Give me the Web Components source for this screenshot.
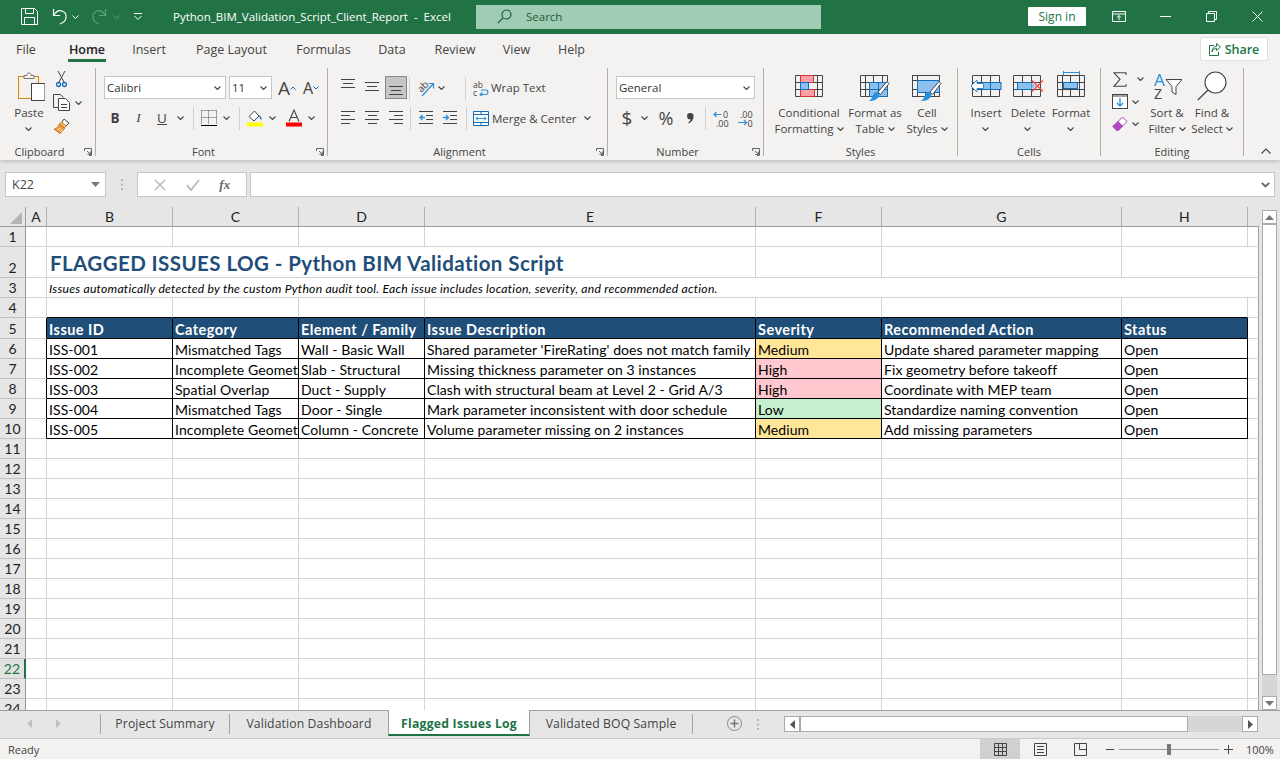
<!DOCTYPE html>
<html lang="en">
<head>
<meta charset="utf-8">
<title>Python_BIM_Validation_Script_Client_Report - Excel</title>
<style>
	html, body { margin: 0; height: 100%; overflow: hidden; background: #e6e6e6; }
	body { display: flex; flex-direction: column; width: 1280px; height: 759px; font-family: "Open Sans", sans-serif; }
</style>
</head>
<body>
<xl-titlebar></xl-titlebar>
<xl-menu></xl-menu>
<xl-ribbon></xl-ribbon>
<xl-formula></xl-formula>
<xl-sheet></xl-sheet>
<xl-sheet-tabs></xl-sheet-tabs>
<xl-status></xl-status>

<script>
const DK = '#444444', BL = '#2b8fd9', DB = '#106ebe', LB = '#8cc0ee', RD = '#d13438', PK = '#ff9ea3';

const brush = `<path d="M27 6.5 L18 17 L20.5 19.5 L29 8.5 Z" fill="#fff" stroke="${DK}" stroke-linejoin="round"/>
	<path d="M13.5 19 C16 15 20 17 19.5 20 C18 25 13 26 9 26 C12 24 12 22 13.5 19Z" fill="${BL}"/>`;
const grid28 = (x = 0) => `<path d="M${x + .5} .5h27v21h-27zM${x + .5} 7.5h27M${x + .5} 14.5h27M${x + 5.5} .5v21M${x + 13.5} .5v21M${x + 22.5} .5v21" fill="none" stroke="${DK}"/>`;
const lines = (rows) => rows.map(([x, y, w]) => `<path d="M${x} ${y + .5}h${w}" stroke="${DK}"/>`).join('');

const ICONS = {
	save: [17, 17, `<path d="M.5.5h13l3 3v13H.5zM4.5.5v5h8v-5M3.5 16.5v-7h10v7" fill="none" stroke="#fff"/>`],
	undo: [17, 17, `<path d="M2.5 1v6.5H9M2.5 7.5C5 3.5 8 2 11 3c3 1 4.5 4 4 7-.5 2.5-3 5-6 6" fill="none" stroke="#fff" stroke-width="1.2"/>`],
	redo: [17, 17, `<path d="M14.5 1v6.5H8M14.5 7.5C12 3.5 9 2 6 3 3 4 1.5 7 2 10c.5 2.5 3 5 6 6" fill="none" stroke="#5f9f7d" stroke-width="1.2"/>`],
	chevw: [7, 4, `<path d="M.5.5l3 3 3-3" fill="none" stroke="#fff"/>`],
	chevg: [7, 4, `<path d="M.5.5l3 3 3-3" fill="none" stroke="#5f9f7d"/>`],
	qat: [8, 7, `<path d="M0 .5h8" stroke="#fff"/><path d="M.5 3l3.5 3.5L7.5 3" fill="none" stroke="#fff"/>`],
	chev: [7, 4, `<path d="M.5.5l3 3 3-3" fill="none" stroke="#444" stroke-width="1.1"/>`],
	search: [15, 15, `<circle cx="9.5" cy="5.5" r="4.5" fill="none" stroke="#1c5e3b" stroke-width="1.2"/><path d="M6 9L.8 14.2" stroke="#1c5e3b" stroke-width="1.2"/>`],
	display: [14, 11, `<path d="M.5.5h13v10H.5zM.5 3h13" fill="none" stroke="#fff"/><path d="M7 9V4.5M5 6.5l2-2 2 2" fill="none" stroke="#fff"/>`],
	min: [11, 1, `<path d="M0 .5h11" stroke="#fff"/>`],
	restore: [11, 11, `<path d="M.5 2.5h8v8h-8zM2.5 2.5v-2h8v8h-2" fill="none" stroke="#fff"/>`],
	close: [11, 11, `<path d="M.5.5l10 10M10.5.5l-10 10" stroke="#fff"/>`],
	share: [12, 13, `<path d="M5 2.5H.5v10h9V8.5" fill="none" stroke="#217346"/><path d="M7.5.5l4 3.5-4 3.5V5.5C5 5.5 3.5 7 3 9c0-3.5 2-5.5 4.5-5.5z" fill="none" stroke="#217346"/>`],
	paste: [32, 30, `<g transform="translate(5 0)"><rect x=".5" y="5.5" width="20" height="22" fill="#fdeec8" stroke="#d0862a"/><rect x="3" y="8" width="15" height="18" fill="#f3f2f1"/>
		<path d="M6 7.5V4.5h3C9 1 13 1 13 4.5h3v3z" fill="#f3f2f1" stroke="#777"/>
		<rect x="13.5" y="12.5" width="13.5" height="17" fill="#fff" stroke="${DK}"/></g>`],
	cut: [11, 17, `<path d="M2 0l6 11M9 0L3 11" stroke="${DK}" fill="none"/><circle cx="2.5" cy="13.5" r="2" fill="none" stroke="${DB}" stroke-width="1.3"/><circle cx="8.5" cy="13.5" r="2" fill="none" stroke="${DB}" stroke-width="1.3"/>`],
	copy: [17, 17, `<path d="M5.5 13.5H.5V.5h7l3 3" fill="#f3f2f1" stroke="${DK}"/><path d="M5.5 4.5h7l4 4v8h-11z" fill="#fff" stroke="${DK}"/><path d="M8 10.5h6M8 13.5h6" stroke="${DK}"/>`],
	painter: [17, 16, `<path d="M11 1l5 4-3 3-4-4z" fill="#fff" stroke="${DK}"/><path d="M9 4l4 4-1.5 2-5-4z" fill="#f5b26a" stroke="#d0862a"/><path d="M6.5 6l5 4.5L7 15.5 1 11c2 0 3-.5 5.5-5z" fill="#f29b3a" stroke="#c96f12"/><path d="M5 12l2-2M7.5 13.5l2-2" stroke="#fff"/>`],
	caretup: [6, 4, `<path d="M.5 3.5L3 1l2.5 2.5" fill="none" stroke="${DB}"/>`],
	caretdn: [6, 4, `<path d="M.5.5L3 3 5.5.5" fill="none" stroke="${DB}"/>`],
	borders: [16, 16, `<path d="M.5.5h15M.5.5v14M15.5.5v14M7.5.5v14M.5 7.5h15" fill="none" stroke="#555" stroke-dasharray="1 1"/><path d="M0 15.5h16" stroke="#000"/>`],
	fill: [16, 18, `<path d="M2 7.5L7.5 2l4.5 5-5 5z" fill="#fff" stroke="${DK}"/><path d="M12 6c2 1 3 3 2.5 5-1-.5-2-2-2.5-5z" fill="${DB}"/><rect y="13.5" width="16" height="4" fill="#ffff00"/>`],
	fontcolor: [16, 18, `<path d="M3 12.5L8 1l5 11.5M5 8.5h6" fill="none" stroke="${DK}" stroke-width="1.1"/><rect y="13.5" width="16" height="4" fill="#ff0000"/>`],
	atop: [15, 10, lines([[0, 0, 14], [2, 4, 10], [0, 8, 14]])],
	amid: [15, 10, lines([[0, 0, 14], [2, 4, 10], [0, 8, 14]])],
	abot: [15, 10, lines([[0, 0, 14], [2, 4, 10], [0, 8, 14]])],
	aleft: [15, 14, lines([[0, 0, 14], [0, 4, 9], [0, 8, 14], [0, 12, 9]])],
	acenter: [15, 14, lines([[0, 0, 14], [3, 4, 9], [0, 8, 14], [3, 12, 9]])],
	aright: [15, 14, lines([[0, 0, 14], [5, 4, 9], [0, 8, 14], [5, 12, 9]])],
	orient: [18, 18, `<g transform="rotate(-45 7 7)"><text x="0" y="10" font-family="Open Sans" font-size="10" fill="${DK}">ab</text></g><path d="M5 17L16 5M11.5 4.5H16.5V9.5" fill="none" stroke="${BL}" stroke-width="1.2"/>`],
	outdent: [15, 14, lines([[0, 0, 14], [7, 4, 7], [7, 8, 7], [0, 12, 14]]) + `<path d="M6 6.5H1M3.5 4L1 6.5 3.5 9" fill="none" stroke="${BL}" stroke-width="1.3"/>`],
	indent: [15, 14, lines([[0, 0, 14], [7, 4, 7], [7, 8, 7], [0, 12, 14]]) + `<path d="M0 6.5h5M3 4l2.5 2.5L3 9" fill="none" stroke="${BL}" stroke-width="1.3"/>`],
	wrap: [16, 15, `<text x="0" y="7" font-family="Open Sans" font-size="8.5" fill="${DK}">ab</text><text x="0" y="14.5" font-family="Open Sans" font-size="8.5" fill="${DK}">c</text><path d="M8 9h5c2.5 0 2.5 4.5 0 4.5H7M9.5 11.5L7 13.5 9.5 15.5" fill="none" stroke="${BL}" stroke-width="1.1"/>`],
	merge: [16, 15, `<path d="M.5.5h15v14H.5zM.5 3.5h15M.5 11.5h15M8 .5v3M8 11.5v3" fill="#fff" stroke="${DB}"/><path d="M3 7.5h10M5 5.5l-2 2 2 2M11 5.5l2 2-2 2" fill="none" stroke="${BL}"/>`],
	comma: [7, 11, `<path d="M3 0a3 3 0 0 1 3.5 3.5C6.5 7 4 9.5 1.5 10.5L1 9.8c1.5-1 2.5-2.2 2.5-3.5A3 3 0 0 1 3 0z" fill="${DK}"/>`],
	incdec: [16, 17, `<text x="10" y="8" font-family="Open Sans" font-size="9" fill="${DK}">0</text><text x="3" y="16.5" font-family="Open Sans" font-size="9" fill="${DK}">.00</text><path d="M8.5 4.5H1M3.5 2L1 4.5 3.5 7" fill="none" stroke="${BL}" stroke-width="1.2"/>`],
	decdec: [16, 17, `<text x="3" y="7.5" font-family="Open Sans" font-size="9" fill="${DK}">.00</text><text x="10.500" y="16.5" font-family="Open Sans" font-size="9" fill="${DK}">0</text><path d="M1 12.500h8.500M7 10l2.500 2.500L7 15" fill="none" stroke="${BL}" stroke-width="1.2"/>`],
	launch: [8, 8, `<path d="M.5 3V.5h7v7H5M3 3l3.5 3.5M6.5 3.5v3h-3" fill="none" stroke="#666"/>`],
	cf: [28, 22, grid28() + `<rect x="5.5" y=".5" width="13" height="7" fill="${PK}" stroke="${RD}"/><rect x="5.5" y="14.5" width="14" height="7" fill="${PK}" stroke="${RD}"/><rect x="5.5" y="7.5" width="8" height="7" fill="${LB}" stroke="${DB}"/>`],
	fat: [30, 27, grid28() + `<rect x="9.5" y="7.5" width="18" height="14" fill="${LB}" stroke="${DB}"/><path d="M18.5 7.5v14M9.5 14.5h18" stroke="${DB}" fill="none"/>` + brush],
	cellst: [30, 27, `<rect x=".5" y=".5" width="27" height="21" fill="none" stroke="${DK}"/><path d="M.5 14.5h27M.5 5.5h5M5.5.5v21M13.5 17v4M22.5 17v4" stroke="${DK}"/><rect x="5.5" y="5.5" width="22" height="12" fill="${LB}" stroke="${DB}"/>` + brush],
	insert: [32, 22, `<path d="M2.5.5h27v21h-27zM2.5 7.5h27M2.5 14.5h27M11.5.5v21M20.5.5v21" fill="none" stroke="${DK}"/><rect x="12.5" y="7.5" width="18.5" height="7" fill="${LB}" stroke="${DB}"/><path d="M20.5 7.5v7" stroke="${DB}"/><path d="M13.5 8.5H7V5L.8 11 7 17v-3.5h6.5z" fill="#fff" stroke="${BL}"/>`],
	del: [31, 22, `<path d="M.5.5h27v21H.5zM.5 7.5h27M.5 14.5h27M9.5.5v21M18.5.5v21" fill="none" stroke="${DK}"/><rect x="4.5" y="7.5" width="14" height="7" fill="${LB}" stroke="${DB}"/><path d="M18.5 7.5L23 11l-4.5 3.5z" fill="${LB}"/><path d="M19 5.5l11 11M30 5.5l-11 11" stroke="#ff4040" stroke-width="1.2"/>`],
	format: [28, 27, `<path d="M6.5 1v4M22.5 1v4M6.5 2.5h16" fill="none" stroke="${BL}"/><g transform="translate(0 5)">${grid28()}<rect x="6.5" y="7.5" width="14" height="6" fill="${LB}" stroke="${DB}"/></g>`],
	sigma: [14, 15, `<path d="M13 3V.8H1l6 6.5-6 7h12v-2" fill="none" stroke="${DK}" stroke-width="1.1"/>`],
	filld: [16, 15, `<rect x=".5" y=".5" width="15" height="14" fill="#fff" stroke="${DK}"/><path d="M.5 2h15" stroke="${DK}"/><path d="M8 4v8M5 9l3 3 3-3" fill="none" stroke="${BL}" stroke-width="1.3"/>`],
	eraser: [16, 16, `<path d="M1 10.5L10.5 1l4.5 4.5L5.5 15z" fill="#fff" stroke="#a347ba"/><path d="M1 10.5L6 5.5l4.5 4.5L5.5 15z" fill="#b146c2" stroke="#a347ba"/>`],
	sort: [30, 30, `<text x="2" y="15" font-family="Open Sans" font-size="17" fill="${BL}">A</text><text x="2" y="28" font-family="Open Sans" font-size="14" fill="${DK}">Z</text><path d="M14 8.5h16l-6 7v8l-4-2.5v-5.500z" fill="#fff" stroke="${DK}"/>`],
	find: [30, 30, `<circle cx="18.5" cy="11.5" r="10.5" fill="#fff" stroke="${DK}" stroke-width="1.1"/><path d="M11 19L.8 29" stroke="${DK}" stroke-width="1.2"/>`],
	collapse: [10, 6, `<path d="M.5 5.5L5 1l4.5 4.5" fill="none" stroke="#444" stroke-width="1.1"/>`],
	cancel: [12, 12, `<path d="M1 1l10 10M11 1L1 11" stroke="#bdbdbd" stroke-width="1.6"/>`],
	enter: [14, 12, `<path d="M1 6l4 5 8-10" fill="none" stroke="#bdbdbd" stroke-width="2"/>`],
	dropg: [9, 5, `<path d="M0 0h9L4.5 5z" fill="#777"/>`],
	chevb: [9, 6, `<path d="M.8.8L4.5 4.5 8.2.8" fill="none" stroke="#666" stroke-width="1.8"/>`],
	corner: [12, 12, `<path d="M12 0v12H0z" fill="#b4b4b4"/>`],
	scrup: [9, 5, `<path d="M4.5 0L9 5H0z" fill="#777"/>`],
	scrdn: [9, 5, `<path d="M0 0h9L4.5 5z" fill="#777"/>`],
	scrl: [5, 9, `<path d="M0 4.5L5 0v9z" fill="#555"/>`],
	scrr: [5, 9, `<path d="M5 4.5L0 0v9z" fill="#555"/>`],
	navl: [5, 9, `<path d="M0 4.5L5 0v9z" fill="#c0c0c0"/>`],
	navr: [5, 9, `<path d="M5 4.5L0 0v9z" fill="#c0c0c0"/>`],
	plus: [15, 15, `<circle cx="7.5" cy="7.5" r="7" fill="none" stroke="#8a8a8a"/><path d="M7.5 3.5v8M3.5 7.5h8" stroke="#777" stroke-width="1.5"/>`],
	vdots: [2, 11, `<path d="M0 0h2v2H0zM0 4.5h2v2H0zM0 9h2v2H0z" fill="#b5b5b5"/>`],
	vnormal: [13, 13, `<path d="M.5.5h12v12H.5zM4.5.5v12M8.5.5v12M.5 4.5h12M.5 8.5h12" fill="none" stroke="#444"/>`],
	vpage: [13, 13, `<path d="M.5.5h12v12H.5z" fill="none" stroke="#444"/><path d="M3 3.5h7M3 6.5h7M3 9.5h7" stroke="#444"/>`],
	vbreak: [13, 13, `<path d="M.5 12.5V.5h12v12zM5.5.5v6h7" fill="none" stroke="#444"/>`],
	zminus: [8, 1, `<path d="M0 .5h8" stroke="#444"/>`],
	zplus: [9, 9, `<path d="M0 4.5h9M4.5 0v9" stroke="#444"/>`],
};

class XlIcon extends HTMLElement {
	connectedCallback() {
		if (this.shadowRoot) return;
		const [w, h, body] = ICONS[this.getAttribute('name')];
		this.attachShadow({ mode: 'open' }).innerHTML = `<style>
			:host { display: inline-flex; flex: none; line-height: 0; }
		</style><svg width="${w}" height="${h}" viewBox="0 0 ${w} ${h}">${body}</svg>`;
	}
}
customElements.define('xl-icon', XlIcon);

class XlTitlebar extends HTMLElement {
	constructor() {
		super();
		this.attachShadow({ mode: 'open' }).innerHTML = `<style>
			:host {
				display: flex; flex: none; height: 34px; align-items: center; box-sizing: border-box;
				background: #217346; color: #fff; padding: 0 0 1px 21px;
				font: 11.5px "Open Sans", sans-serif;
			}
			.title { width: 303px; flex: none; margin-left: 31px; white-space: pre; }
			.search {
				width: 345px; height: 24px; flex: none; display: flex; align-items: center; box-sizing: border-box;
				background: #a0ccb3; color: #1c5e3b; padding-left: 21px; font-size: 11.5px;
			}
			.search span { margin-left: 14px; }
			.signin {
				margin-left: auto; width: 58px; height: 19px; background: #fff; color: #217346; border-radius: 1px;
				display: flex; align-items: center; justify-content: center; font-size: 12px;
			}
		</style>
		<xl-icon name="save"></xl-icon>
		<xl-icon name="undo" style="margin-left:13px"></xl-icon>
		<xl-icon name="chevw" style="margin-left:4px"></xl-icon>
		<xl-icon name="redo" style="margin-left:12px"></xl-icon>
		<xl-icon name="chevg" style="margin-left:5px"></xl-icon>
		<xl-icon name="qat" style="margin-left:14px"></xl-icon>
		<span class="title">Python_BIM_Validation_Script_Client_Report  -  Excel</span>
		<div class="search"><xl-icon name="search"></xl-icon><span>Search</span></div>
		<div class="signin">Sign in</div>
		<xl-icon name="display" style="margin-left:26px"></xl-icon>
		<xl-icon name="min" style="margin-left:34px"></xl-icon>
		<xl-icon name="restore" style="margin-left:35px"></xl-icon>
		<xl-icon name="close" style="margin-left:35px;margin-right:17px"></xl-icon>`;
	}
}
customElements.define('xl-titlebar', XlTitlebar);

class XlMenu extends HTMLElement {
	constructor() {
		super();
		const tabs = [['File', 52], ['Home', 70], ['Insert', 54], ['Page Layout', 111], ['Formulas', 73], ['Data', 64], ['Review', 62], ['View', 61], ['Help', 49]];
		this.attachShadow({ mode: 'open' }).innerHTML = `<style>
			:host {
				display: flex; flex: none; height: 30px; background: #f3f2f1; color: #444;
				font: 12.5px "Open Sans", sans-serif; box-sizing: border-box;
			}
			.tab { flex: none; display: flex; justify-content: center; height: 30px; line-height: 31px; }
			.tab span { display: block; height: 26px; padding: 0 1px; }
			.on { color: #222; font-weight: 600; }
			.on span { border-bottom: 3px solid #217346; height: 25px; }
			.share {
				margin: 3px 12px 0 auto; width: 68px; height: 24px; box-sizing: border-box; background: #fff;
				border: 1px solid #e1dfdd; border-radius: 2px; color: #217346; font-weight: 600;
				display: flex; align-items: center; justify-content: center; gap: 4px; font-size: 12.5px;
			}
		</style>
		${tabs.map(([t, w]) => `<div class="tab ${t === 'Home' ? 'on' : ''}" style="width:${w}px"><span>${t}</span></div>`).join('')}
		<div class="share"><xl-icon name="share"></xl-icon>Share</div>`;
	}
}
customElements.define('xl-menu', XlMenu);

class XlGroup extends HTMLElement {
	connectedCallback() {
		if (this.shadowRoot) return;
		const launcher = this.hasAttribute('launcher');
		this.attachShadow({ mode: 'open' }).innerHTML = `<style>
			:host {
				display: flex; flex-direction: column; flex: none; height: 88px; box-sizing: border-box;
				border-right: 1px solid #b3b0ad; width: ${this.getAttribute('width')}px;
			}
			.body { flex: 1; min-height: 0; display: flex; }
			.foot {
				height: 8px; line-height: 8px; position: relative; text-align: center; color: #444; font-size: 11px;
				padding-right: ${launcher ? 16 : 0}px;
			}
			xl-icon { position: absolute; right: 3px; top: 0; }
		</style><div class="body"><slot></slot></div>
		<div class="foot"><span>${this.getAttribute('label')}</span>${launcher ? '<xl-icon name="launch"></xl-icon>' : ''}</div>`;
	}
}
customElements.define('xl-group', XlGroup);

class XlLarge extends HTMLElement {
	connectedCallback() {
		if (this.shadowRoot) return;
		const parts = this.getAttribute('text').split('|');
		const last = parts.length - 1;
		const chev = '<xl-icon class="c" name="chev"></xl-icon>';
		const body = last
			? parts.map((p, i) => `<span>${p}${i === last ? chev : ''}</span>`).join('')
			: `<span>${parts[0]}</span><span class="chev"><xl-icon name="chev"></xl-icon></span>`;
		this.attachShadow({ mode: 'open' }).innerHTML = `<style>
			:host {
				display: flex; flex-direction: column; align-items: center; flex: none; width: ${this.getAttribute('width')}px;
				font-size: 11.5px; line-height: 16px; color: #444; text-align: center; white-space: nowrap;
			}
			.ic { height: 29px; display: flex; align-items: flex-end; justify-content: center; margin-bottom: 8px; flex: none; }
			.lines { display: flex; flex-direction: column; align-items: center; }
			xl-icon.c { margin-left: 3px; vertical-align: 2px; }
			.chev { height: 16px; display: flex; align-items: center; }
			:host([low]) .ic { margin-bottom: 4px; height: 33px; }
			:host([drop]) .ic xl-icon { margin-bottom: -5px; }
		</style><div class="ic"><xl-icon name="${this.getAttribute('icon')}"></xl-icon></div><div class="lines">${body}</div>`;
	}
}
customElements.define('xl-large', XlLarge);

class XlRibbon extends HTMLElement {
	constructor() {
		super();
		const ic = (name, ml = 0, w = 0) => `<xl-icon name="${name}" style="margin-left:${ml}px${w ? `;width:${w}px;justify-content:center` : ''}"></xl-icon>`;
		const sep = (ml) => `<i class="sep" style="margin-left:${ml}px"></i>`;
		this.attachShadow({ mode: 'open' }).innerHTML = `<style>
			:host {
				display: flex; flex: none; height: 96px; box-sizing: border-box; padding-top: 4px; background: #f3f2f1;
				font: 11.5px "Open Sans", sans-serif; color: #444; position: relative;
				box-shadow: 0 2px 3px #00000026;
			}
			.rows { display: flex; flex-direction: column; padding-top: 8px; gap: 6px; }
			.row { display: flex; align-items: center; height: 24px; white-space: nowrap; }
			.row > span.t { margin-left: 2px; }
			.sel {
				flex: none; height: 23px; align-self: flex-start; box-sizing: border-box; background: #fff; border: 1px solid #c8c6c4;
				display: flex; align-items: center; justify-content: space-between; padding: 0 4px 0 2px; color: #333;
			}
			.sep { flex: none; width: 1px; height: 23px; background: #d2d0ce; }
			.b { flex: none; display: flex; align-items: center; justify-content: center; height: 22px; }
			.on { background: #c8c6c4; box-sizing: border-box; border: 1px solid #8a8886; }
			.col { display: flex; flex-direction: column; flex: none; }
			.col .b { height: 23px; justify-content: flex-start; }
			.col.tight .b { height: 22.5px; }
			.fg { font-size: 13.5px; color: #444; }
			.sz { font-size: 19px; color: #444; line-height: 22px; }
			.collapse { position: absolute; right: 9px; bottom: 6px; }
		</style>
		<xl-group width="96" label="Clipboard" launcher>
			<xl-large style="margin-left:12px" low width="34" icon="paste" text="Paste"></xl-large>
			<div class="col" style="margin-left:6px;width:32px">
				<div class="b">${ic('cut', 4)}</div>
				<div class="b">${ic('copy', 1)}${ic('chev', 5)}</div>
				<div class="b">${ic('painter', 1)}</div>
			</div>
		</xl-group>
		<xl-group width="232" label="Font" launcher>
			<div class="rows" style="padding-left:8px">
				<div class="row">
					<div class="sel" style="width:122px">Calibri<xl-icon name="chev"></xl-icon></div>
					<div class="sel" style="width:43px;margin-left:3px">11<xl-icon name="chev"></xl-icon></div>
					<span class="sz" style="margin-left:6px">A</span>${ic('caretup', 0)}
					<span class="sz" style="margin-left:7px;font-size:16px">A</span>${ic('caretdn', 0)}
				</div>
				<div class="row">
					<div class="b fg" style="width:22px;font-weight:700">B</div>
					<div class="b fg" style="width:25px;font-style:italic;font-family:'Liberation Serif'">I</div>
					<div class="b fg" style="width:22px;text-decoration:underline">U</div>
					<div class="b" style="width:14px">${ic('chev')}</div>
					${sep(6)}${ic('borders', 7)}
					<div class="b" style="width:12px;margin-left:3px">${ic('chev')}</div>
					${sep(7)}${ic('fill', 7)}
					<div class="b" style="width:12px;margin-left:3px">${ic('chev')}</div>
					${ic('fontcolor', 8)}
					<div class="b" style="width:12px;margin-left:3px">${ic('chev')}</div>
				</div>
			</div>
		</xl-group>
		<xl-group width="280" label="Alignment" launcher>
			<div class="rows" style="padding-left:8px">
				<div class="row">
					<div class="b" style="width:24px;height:24px;align-items:flex-start;padding-top:3px;box-sizing:border-box">${ic('atop')}</div>
					<div class="b" style="width:24px;height:24px;padding-bottom:3px;box-sizing:border-box">${ic('amid')}</div>
					<div class="b on" style="width:22px;height:23px;margin-left:1px;align-self:flex-start;align-items:flex-end;padding-bottom:2px">${ic('abot')}</div>
					${sep(2)}${ic('orient', 7)}
					<div class="b" style="width:12px">${ic('chev')}</div>
					${sep(18)}${ic('wrap', 7)}<span class="t" style="margin-top:-2px">Wrap Text</span>
				</div>
				<div class="row">
					<div class="b" style="width:24px">${ic('aleft')}</div>
					<div class="b" style="width:24px">${ic('acenter')}</div>
					<div class="b" style="width:24px">${ic('aright')}</div>
					${sep(2)}
					<div class="b" style="width:24px;margin-left:3px">${ic('outdent')}</div>
					<div class="b" style="width:24px">${ic('indent')}</div>
					${sep(4)}${ic('merge', 6)}<span class="t" style="margin-left:3px;width:92px">Merge &amp; Center</span>${ic('chev')}
				</div>
			</div>
		</xl-group>
		<xl-group width="156" label="Number" launcher>
			<div class="rows" style="padding-left:8px">
				<div class="row"><div class="sel" style="width:139px">General<xl-icon name="chev"></xl-icon></div></div>
				<div class="row">
					<div class="b" style="width:22px;font-size:19px">$</div>
					<div class="b" style="width:14px;margin-left:-1px">${ic('chev')}</div>
					<div class="b" style="width:24px;font-size:18px;margin-left:3px">%</div>
					<div class="b" style="width:24px">${ic('comma')}</div>
					${sep(3)}${ic('incdec', 7)}${ic('decdec', 8)}
				</div>
			</div>
		</xl-group>
		<xl-group width="194" label="Styles">
			<xl-large style="margin-left:8px" width="74" icon="cf" text="Conditional|Formatting"></xl-large>
			<xl-large drop width="58" icon="fat" text="Format as|Table"></xl-large>
			<xl-large drop width="46" icon="cellst" text="Cell|Styles"></xl-large>
		</xl-group>
		<xl-group width="143" label="Cells">
			<xl-large style="margin-left:7px" width="42" icon="insert" text="Insert"></xl-large>
			<xl-large width="42" icon="del" text="Delete"></xl-large>
			<xl-large width="44" icon="format" text="Format"></xl-large>
		</xl-group>
		<xl-group width="143" label="Editing">
			<div class="col tight" style="margin-left:4px;width:40px">
				<div class="b">${ic('sigma', 8)}${ic('chev', 10)}</div>
				<div class="b">${ic('filld', 7)}${ic('chev', 4)}</div>
				<div class="b">${ic('eraser', 7)}${ic('chev', 4)}</div>
			</div>
			<xl-large low width="44" icon="sort" text="Sort &amp;|Filter"></xl-large>
			<xl-large low width="46" icon="find" text="Find &amp;|Select"></xl-large>
		</xl-group>
		<xl-icon class="collapse" name="collapse"></xl-icon>`;
	}
}
customElements.define('xl-ribbon', XlRibbon);

class XlFormula extends HTMLElement {
	constructor() {
		super();
		this.attachShadow({ mode: 'open' }).innerHTML = `<style>
			:host {
				display: flex; flex: none; height: 47px; box-sizing: border-box; padding: 12px 5px 10px;
				background: #e6e6e6; font: 12.5px "Open Sans", sans-serif; color: #444;
			}
			.box { height: 25px; box-sizing: border-box; background: #fff; border: 1px solid #c6c6c6; display: flex; align-items: center; flex: none; }
			.name { width: 101px; padding: 0 5px 0 6px; justify-content: space-between; }
			.btns { width: 110px; margin-left: 13px; justify-content: space-around; padding: 0 6px; }
			.fx { font: italic 700 13px "Liberation Serif", serif; color: #666; }
			.input { flex: 1; margin-left: 3px; justify-content: flex-end; padding-right: 4px; }
			.dots { width: 31px; display: flex; align-items: center; justify-content: center; flex: none; }
		</style>
		<div class="box name">K22<xl-icon name="dropg"></xl-icon></div>
		<div class="dots" style="width:0;margin-left:16px"><xl-icon name="vdots"></xl-icon></div>
		<div class="box btns" style="margin-left:15px">
			<xl-icon name="cancel"></xl-icon><xl-icon name="enter"></xl-icon><span class="fx">fx</span>
		</div>
		<div class="box input"><xl-icon name="chevb"></xl-icon></div>`;
	}
}
customElements.define('xl-formula', XlFormula);

const COLS = ['A', 'B', 'C', 'D', 'E', 'F', 'G', 'H'];
const WIDTHS = [21, 126, 126, 126, 331, 126, 240, 126, 11];
const HEAD = ['Issue ID', 'Category', 'Element / Family', 'Issue Description', 'Severity', 'Recommended Action', 'Status'];
const ISSUES = [
	['ISS-001', 'Mismatched Tags', 'Wall - Basic Wall', "Shared parameter 'FireRating' does not match family parameter", 'Medium', 'Update shared parameter mapping', 'Open'],
	['ISS-002', 'Incomplete Geometry', 'Slab - Structural', 'Missing thickness parameter on 3 instances', 'High', 'Fix geometry before takeoff', 'Open'],
	['ISS-003', 'Spatial Overlap', 'Duct - Supply', 'Clash with structural beam at Level 2 - Grid A/3', 'High', 'Coordinate with MEP team', 'Open'],
	['ISS-004', 'Mismatched Tags', 'Door - Single', 'Mark parameter inconsistent with door schedule', 'Low', 'Standardize naming convention', 'Open'],
	['ISS-005', 'Incomplete Geometry', 'Column - Concrete', 'Volume parameter missing on 2 instances', 'Medium', 'Add missing parameters', 'Open'],
];

class XlSheet extends HTMLElement {
	constructor() {
		super();
		const rowHeights = [20, 20, 31, 20, 20, 21];
		for (let r = 6; r <= 24; r++) rowHeights.push(20);
		let cells = '<div class="ch corner"><xl-icon name="corner"></xl-icon></div>';
		COLS.forEach(c => { cells += `<div class="ch">${c}</div>`; });
		cells += '<div class="ch" style="border-right:0"></div>';
		const blank = (n, cls = '') => { let s = ''; for (let i = 0; i < n; i++) s += `<div class="c ${cls}"></div>`; return s; };
		const last = '<div class="c i"></div>';
		for (let r = 1; r <= 24; r++) {
			cells += `<div class="rh ${r === 22 ? 'cur' : ''}">${r}</div>`;
			if (r === 2) {
				cells += `<div class="c"></div><div class="c title" style="grid-column:span 4">FLAGGED ISSUES LOG - Python BIM Validation Script</div>${blank(2)}<div class="c i" style="grid-column:span 2"></div>`;
			} else if (r === 3) {
				cells += `<div class="c"></div><div class="c sub i" style="grid-column:span 8">Issues automatically detected by the custom Python audit tool. Each issue includes location, severity, and recommended action.</div>`;
			} else if (r === 4) {
				cells += `<div class="c"></div>${blank(7, 'abv')}${last}`;
			} else if (r === 5) {
				cells += '<div class="c lft"></div>' + HEAD.map(t => `<div class="c th">${t}</div>`).join('') + last;
			} else if (r >= 6 && r <= 10) {
				cells += '<div class="c lft"></div>' + ISSUES[r - 6].map((t, i) => `<div class="c td ${i === 4 ? t.toLowerCase() : ''}">${t}</div>`).join('') + last;
			} else {
				cells += blank(8) + last;
			}
		}
		this.attachShadow({ mode: 'open' }).innerHTML = `<style>
			:host {
				display: flex; flex: none; height: 503px; overflow: hidden; background: #e6e6e6;
			}
			.grid {
				display: grid; flex: none; width: 1259px; overflow: hidden; box-sizing: border-box; align-content: start;
				grid-template-columns: 26px ${WIDTHS.map(w => w + 'px').join(' ')};
				grid-template-rows: ${rowHeights.map(h => h + 'px').join(' ')};
				background: #fff; font: 14px "Lato", "Open Sans", sans-serif; letter-spacing: .08px; color: #000;
			}
			.ch {
				background: #e6e6e6; border-bottom: 1px solid #9b9b9b; border-right: 1px solid #b0b0b0;
				display: flex; align-items: center; justify-content: center; color: #222; box-sizing: border-box;
			}
			.corner { border-right: 1px solid #9b9b9b; align-items: flex-end; justify-content: flex-end; padding: 0 3px 2px 0; }
			.rh {
				background: #e6e6e6; border-bottom: 1px solid #c0c0c0; border-right: 1px solid #9b9b9b;
				display: flex; align-items: flex-end; justify-content: center; color: #222; box-sizing: border-box;
				line-height: 18px;
			}
			.cur { background: #e1e1e1; color: #217346; border-right: 2px solid #217346; }
			.c {
				box-sizing: border-box; border-right: 1px solid #d4d4d4; border-bottom: 1px solid #d4d4d4;
				white-space: nowrap; overflow: hidden; padding-left: 2px; line-height: 16px;
				display: flex; align-items: flex-end;
			}
			.c.i { border-right-color: #a0a0a0; }
			.abv { border-bottom-color: #000; }
			.lft { border-right-color: #000; }
			.th { background: #1f4e79; color: #fff; font-weight: 700; border-color: #000; font-size: 14.5px; letter-spacing: .45px; }
			.td { border-color: #000; }
			.medium { background: #ffe699; }
			.high { background: #ffc7ce; }
			.low { background: #c6efce; }
			.title { color: #1f4e79; font-weight: 700; font-size: 20.5px; letter-spacing: .43px; padding-left: 3px; line-height: 28px; }
			.sub { font-style: italic; font-size: 12.2px; letter-spacing: .23px; padding-left: 2px; }
			.vbar { width: 15px; margin: 3px 3px 0; flex: none; display: flex; flex-direction: column; background: #d6d6d6; }
			.btn { height: 14px; background: #fff; border: 1px solid #ababab; display: flex; align-items: center; justify-content: center; box-sizing: border-box; flex: none; }
			.thumb { height: 451px; background: #fff; border: 1px solid #ababab; box-sizing: border-box; flex: none; }
		</style>
		<div class="grid">${cells}</div>
		<div class="vbar">
			<div class="btn"><xl-icon name="scrup"></xl-icon></div>
			<div class="thumb"></div>
			<div style="flex:1"></div>
			<div class="btn"><xl-icon name="scrdn"></xl-icon></div>
		</div>`;
	}
}
customElements.define('xl-sheet', XlSheet);

class XlSheetTabs extends HTMLElement {
	constructor() {
		super();
		const tabs = [['Project Summary', 129], ['Validation Dashboard', 159], ['Flagged Issues Log', 142, 1], ['Validated BOQ Sample', 162]];
		this.attachShadow({ mode: 'open' }).innerHTML = `<style>
			:host {
				display: flex; flex: none; height: 28px; box-sizing: border-box; background: #e6e6e6;
				border-top: 1px solid #9f9f9f; font: 12.2px "Open Sans", sans-serif; color: #444; letter-spacing: .12px;
			}
			.nav { width: 100px; flex: none; display: flex; align-items: center; box-sizing: border-box; padding-left: 27px; gap: 24px; height: 25px; }
			.tab {
				flex: none; height: 20px; margin-top: 3px; box-sizing: border-box; border-left: 1px solid #a0a0a0; padding-bottom: 2px;
				display: flex; align-items: center; justify-content: center;
			}
			.on {
				height: 26px; margin-top: -1px; padding: 3px 0 0; background: #fff; color: #217346; font-weight: 700; border: 1px solid #a0a0a0;
				border-top: 0; border-bottom: 2px solid #217346; letter-spacing: .25px;
			}
			.on + .tab { border-left: 0; }
			.end { width: 1px; height: 20px; margin-top: 3px; background: #a0a0a0; flex: none; }
			.h { display: flex; width: 474px; height: 16px; margin: 5px 0 0 25px; background: #d6d6d6; flex: none; }
			.sb { width: 16px; box-sizing: border-box; background: #fff; border: 1px solid #ababab; display: flex; align-items: center; justify-content: center; flex: none; }
			.th { width: 388px; box-sizing: border-box; background: #fff; border: 1px solid #ababab; flex: none; }
		</style>
		<div class="nav"><xl-icon name="navl"></xl-icon><xl-icon name="navr"></xl-icon></div>
		${tabs.map(([t, w, on]) => `<div class="tab ${on ? 'on' : ''}" style="width:${w}px">${t}</div>`).join('')}
		<i class="end"></i>
		<xl-icon name="plus" style="margin:5px 0 0 34px"></xl-icon>
		<xl-icon name="vdots" style="margin:8px 0 0 15px"></xl-icon>
		<div class="h"><div class="sb"><xl-icon name="scrl"></xl-icon></div><div class="th"></div><div style="flex:1"></div><div class="sb"><xl-icon name="scrr"></xl-icon></div></div>`;
	}
}
customElements.define('xl-sheet-tabs', XlSheetTabs);

class XlStatus extends HTMLElement {
	constructor() {
		super();
		this.attachShadow({ mode: 'open' }).innerHTML = `<style>
			:host {
				display: flex; flex: none; height: 21px; box-sizing: border-box; align-items: center; background: #f3f2f1;
				border-top: 1px solid #c9c9c9; padding-left: 8px; font: 11px "Open Sans", sans-serif; color: #444;
			}
			.view { width: 40px; height: 20px; flex: none; display: flex; align-items: center; justify-content: center; }
			.cur { background: #d2d0ce; margin-left: auto; }
			.slider { width: 100px; height: 1px; background: #a0a0a0; margin-left: 5px; flex: none; display: flex; align-items: center; justify-content: center; }
			.slider i { width: 4px; height: 11px; background: #777; flex: none; }
		</style>
		<span>Ready</span>
		<div class="view cur"><xl-icon name="vnormal"></xl-icon></div>
		<div class="view"><xl-icon name="vpage"></xl-icon></div>
		<div class="view"><xl-icon name="vbreak"></xl-icon></div>
		<xl-icon name="zminus" style="margin-left:6px"></xl-icon>
		<div class="slider"><i></i></div>
		<xl-icon name="zplus" style="margin-left:5px"></xl-icon>
		<span style="margin:0 7px 0 13px;width:27px;white-space:nowrap">100%</span>`;
	}
}
customElements.define('xl-status', XlStatus);
</script>
</body>
</html>
